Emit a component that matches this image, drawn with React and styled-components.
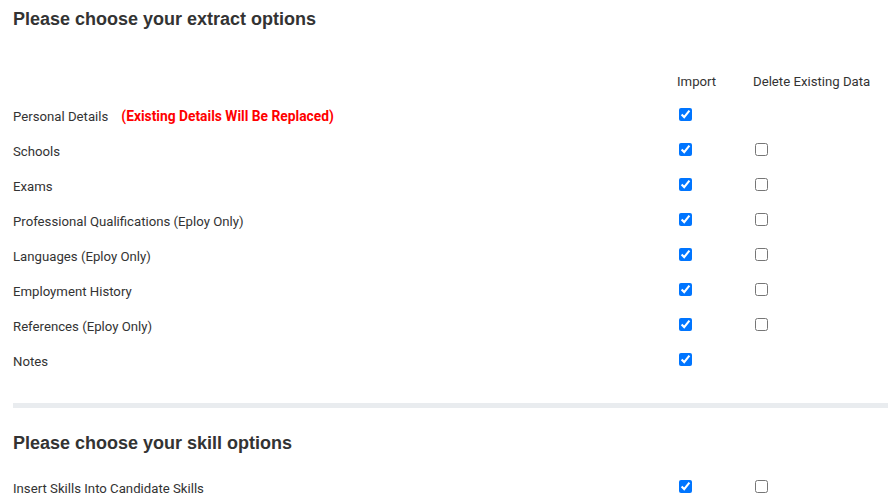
import React from 'react';
import styled, { createGlobalStyle } from 'styled-components';

const GlobalStyle = createGlobalStyle`
  body {
    margin: 0;
    background: #fff;
    font-family: Roboto, "Liberation Sans", Arial, sans-serif;
    color: #333;
  }
`;

const extractRows = [
  { label: 'Personal Details', note: '(Existing Details Will Be Replaced)', imp: true, del: null },
  { label: 'Schools', imp: true, del: false },
  { label: 'Exams', imp: true, del: false },
  { label: 'Professional Qualifications (Eploy Only)', imp: true, del: false },
  { label: 'Languages (Eploy Only)', imp: true, del: false },
  { label: 'Employment History', imp: true, del: false },
  { label: 'References (Eploy Only)', imp: true, del: false },
  { label: 'Notes', imp: true, del: null },
];

const skillRows = [
  { label: 'Insert Skills Into Candidate Skills', imp: true, del: false },
];

const OptionRow = ({ row }) => (
  <Row>
    <Label>
      {row.label}
      {row.note && <Warning>{row.note}</Warning>}
    </Label>
    <Cell>
      <Check type="checkbox" defaultChecked={row.imp} />
    </Cell>
    <Cell>
      {row.del !== null && <Check type="checkbox" defaultChecked={row.del} />}
    </Cell>
  </Row>
);

const App = () => {
  return (
    <Page>
      <GlobalStyle />
      <Section>
        <Heading>Please choose your extract options</Heading>
        <HeaderRow>
          <span />
          <ColTitle>Import</ColTitle>
          <ColTitle>Delete Existing Data</ColTitle>
        </HeaderRow>
        {extractRows.map((row) => (
          <OptionRow key={row.label} row={row} />
        ))}
      </Section>
      <Divider />
      <Section>
        <SkillHeading>Please choose your skill options</SkillHeading>
        <SkillList>
          {skillRows.map((row) => (
            <OptionRow key={row.label} row={row} />
          ))}
        </SkillList>
      </Section>
    </Page>
  );
};

const Page = styled.div`
  padding: 0 0 0 13px;
  width: 875px;
  overflow: hidden;
`;

const Section = styled.div`
  display: flex;
  flex-direction: column;
`;

const Heading = styled.h3`
  margin: 0;
  padding-top: 8px;
  font-family: "Liberation Sans", Arial, sans-serif;
  font-size: 18px;
  font-weight: bold;
  line-height: 22px;
  color: #333;
`;

const SkillHeading = styled(Heading)`
  padding-top: 24px;
`;

const SkillList = styled.div`
  margin-top: 17px;
`;

const HeaderRow = styled.div`
  display: grid;
  grid-template-columns: 664px 76px 1fr;
  align-items: center;
  height: 35px;
  margin-top: 34px;
`;

const ColTitle = styled.span`
  font-size: 13.2px;
  color: #333;
  white-space: nowrap;
`;

const Row = styled.div`
  display: grid;
  grid-template-columns: 664px 76px 1fr;
  align-items: center;
  height: 35px;
`;

const Label = styled.span`
  font-size: 13.2px;
  line-height: 16px;
  color: #333;
`;

const Warning = styled.span`
  margin-left: 13px;
  font-size: 13.8px;
  color: #f00;
  font-weight: bold;
`;

const Cell = styled.span`
  display: flex;
  align-items: center;
`;

const Check = styled.input`
  margin: 0 0 4px 2px;
  width: 13px;
  height: 13px;
`;

const Divider = styled.div`
  height: 5px;
  background: #e9ecef;
  margin-top: 24px;
  margin-right: -20px;
`;

export default App;
